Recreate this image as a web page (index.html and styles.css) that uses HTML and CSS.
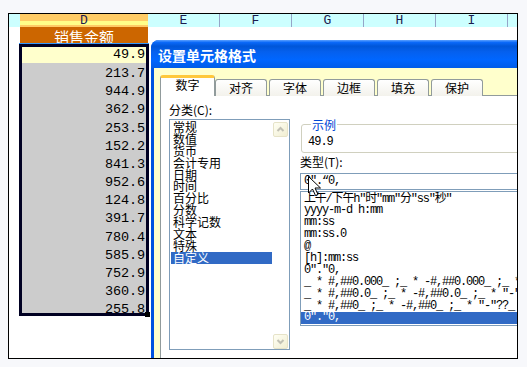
FILE: index.html
```html
<!DOCTYPE html>
<html lang="zh-CN">
<head>
    <meta charset="UTF-8">
    <title>设置单元格格式</title>
    <link rel="stylesheet" href="styles.css">
</head>
<body>
    <div class="sheet">
        <div class="col-heads">
            <div class="head corner"></div>
            <div class="head head-d">D</div>
            <div class="head">E</div>
            <div class="head">F</div>
            <div class="head">G</div>
            <div class="head">H</div>
            <div class="head">I</div>
            <div class="head"></div>
        </div>
        <div class="title-row">
            <div class="title-cell">销售金额</div>
        </div>
        <div class="selection">
            <div class="cells">
                <div class="cell active">49.9</div>
                <div class="cell">213.7</div>
                <div class="cell">944.9</div>
                <div class="cell">362.9</div>
                <div class="cell">253.5</div>
                <div class="cell">152.2</div>
                <div class="cell">841.3</div>
                <div class="cell">952.6</div>
                <div class="cell">124.8</div>
                <div class="cell">391.7</div>
                <div class="cell">780.4</div>
                <div class="cell">585.9</div>
                <div class="cell">752.9</div>
                <div class="cell">360.9</div>
                <div class="cell">255.8</div>
            </div>
            <div class="fill-handle"></div>
        </div>

        <div class="dialog">
            <div class="dialog-title">设置单元格格式</div>
            <div class="dialog-body">
                <div class="tabs">
                    <div class="tab selected">数字</div>
                    <div class="tab">对齐</div>
                    <div class="tab">字体</div>
                    <div class="tab">边框</div>
                    <div class="tab">填充</div>
                    <div class="tab">保护</div>
                </div>
                <div class="panel">
                    <div class="category">
                        <div class="label">分类(C):</div>
                        <div class="listbox">
                            <ul class="categories">
                                <li>常规</li>
                                <li>数值</li>
                                <li>货币</li>
                                <li>会计专用</li>
                                <li>日期</li>
                                <li>时间</li>
                                <li>百分比</li>
                                <li>分数</li>
                                <li>科学记数</li>
                                <li>文本</li>
                                <li>特殊</li>
                                <li class="sel">自定义</li>
                            </ul>
                            <div class="scrollbar">
                                <span class="scroll-btn">
                                    <svg width="13" height="13" viewBox="0 0 13 13"><polyline points="3.5,8 6.5,5 9.5,8" fill="none" stroke="#c2c1b4" stroke-width="2"/></svg>
                                </span>
                                <span class="scroll-btn">
                                    <svg width="13" height="13" viewBox="0 0 13 13"><polyline points="3.5,5 6.5,8 9.5,5" fill="none" stroke="#c2c1b4" stroke-width="2"/></svg>
                                </span>
                            </div>
                        </div>
                    </div>
                    <div class="format">
                        <fieldset class="sample">
                            <legend>示例</legend>
                            <div class="sample-value">49.9</div>
                        </fieldset>
                        <div class="label type-label">类型(T):</div>
                        <div class="type-input">0″.“0,
                            <svg class="cursor" width="13" height="21" viewBox="0 0 13 21"><path d="M0.5 0.5 L0.5 17 L4.5 13 L7.5 19.5 L10 18.5 L7 12 L12.5 12 Z" fill="#fff" stroke="#000" stroke-width="1"/></svg>
                        </div>
                        <ul class="type-list">
                            <li>上午/下午h″时″mm″分″ss″秒″</li>
                            <li>yyyy-m-d h:mm</li>
                            <li>mm:ss</li>
                            <li>mm:ss.0</li>
                            <li>@</li>
                            <li>[h]:mm:ss</li>
                            <li>0″.″0,</li>
                            <li>_ * #,##0.000_ ;_ * -#,##0.000_ ;_ * ″-″???_ ;_ @_ </li>
                            <li>_ * #,##0.0_ ;_ * -#,##0.0_ ;_ * ″-″?_ ;_ @_ </li>
                            <li>_ * #,##0_ ;_ * -#,##0_ ;_ * ″-″??_ ;_ @_ </li>
                            <li class="sel">0″.″0,</li>
                        </ul>
                    </div>
                </div>
            </div>
        </div>
    </div>
</body>
</html>
```

FILE: styles.css
```css
/* Reset and base styles */
* {
    margin: 0;
    padding: 0;
    box-sizing: border-box;
}

body {
    background-color: #f7f8fb;
    padding: 13px 0 0 8px;
    font-family: "Noto Sans CJK SC", sans-serif;
    color: #000;
}

/* Worksheet frame */
.sheet {
    position: relative;
    width: 510px;
    height: 346px;
    border: 1px solid #000;
    background-color: #fff;
    overflow: hidden;
}

.col-heads {
    display: grid;
    grid-template-columns: 11px 128px repeat(6, 72px);
    height: 13px;
    background-color: #ccffff;
}

.head {
    border-right: 1px solid #95a5c8;
    font: 13px/13px "Liberation Mono", monospace;
    color: #1c1c50;
    text-align: center;
}

.head.corner {
    border-right: 0;
}

.head-d {
    border-right: 0;
    background: linear-gradient(#ffcc66 0, #ffcc66 56%, #ffff88 56%, #ffff88 86%, #ffcc66 86%);
}

.title-row {
    height: 16px;
    padding-left: 11px;
}

.title-cell {
    width: 128px;
    height: 16px;
    padding-top: 2px;
    background-color: #cc6600;
    color: #fff;
    font-size: 15px;
    line-height: 15px;
    text-align: center;
}

/* Selected range */
.selection {
    position: relative;
    margin: 1px 0 0 10px;
    width: 130px;
    height: 272px;
    border: 3px solid #000022;
    box-shadow: 0 -1px 0 #3399ff;
    background-color: #cccccc;
}

.cells {
    height: 100%;
    overflow: hidden;
}

.cell {
    height: 18.16px;
    padding-right: 1px;
    font: 13.5px/18.16px "Liberation Mono", monospace;
    letter-spacing: -0.1px;
    text-align: right;
}

.cell.active {
    height: 16px;
    line-height: 16px;
    margin-bottom: 2.16px;
    background-color: #ffffcc;
}

.fill-handle {
    position: absolute;
    right: -4px;
    bottom: -4px;
    width: 5px;
    height: 5px;
    background-color: #000;
}

/* Format cells dialog */
.dialog {
    position: absolute;
    left: 142px;
    top: 26px;
    width: 380px;
    height: 330px;
    display: flex;
    flex-direction: column;
    background-color: #0053e0;
    border-radius: 8px 8px 0 0;
    overflow: hidden;
}

.dialog-title {
    flex: none;
    height: 28px;
    padding: 6px 0 0 7px;
    color: #fff;
    font-size: 14px;
    font-weight: bold;
    line-height: 18px;
    background: linear-gradient(#5aa0ff 0, #0a68f8 9%, #0056d8 22%, #0560ee 42%, #0066ff 70%, #005ce8 100%);
}

.dialog-body {
    flex: 1;
    display: flex;
    flex-direction: column;
    margin-left: 3px;
    padding: 7px 0 0 6px;
    background-color: #ffffcc;
}

.tabs {
    position: relative;
    z-index: 1;
    display: flex;
    align-items: flex-end;
    height: 21px;
}

.tab {
    width: 52px;
    height: 17px;
    margin-left: 2px;
    border: 1px solid #919b9c;
    border-bottom: 0;
    border-radius: 3px 3px 0 0;
    background: linear-gradient(#fff, #f3f2ec);
    font-size: 12px;
    line-height: 15px;
    text-align: center;
}

.tab.selected {
    width: 55px;
    height: 21px;
    margin-left: 0;
    border-top: 3px solid #ffc83c;
    background: #fff;
    line-height: 14px;
}

.tab.selected + .tab {
    margin-left: 0;
}

.panel {
    flex: 1;
    display: grid;
    grid-template-columns: 121px 1fr;
    column-gap: 10px;
    align-items: start;
    margin-top: -1px;
    padding: 7px 0 0 8px;
    border: 1px solid #919b9c;
    background-color: #fff;
    font-size: 12px;
}

.label {
    height: 13px;
    line-height: 13px;
}

.listbox {
    display: flex;
    height: 231px;
    margin-top: 3px;
    border: 1px solid #7f9db9;
}

.categories {
    flex: 1;
    list-style: none;
    padding: 1px 0 0 1px;
}

.categories li {
    height: 11.9px;
    padding-left: 2px;
    line-height: 11.9px;
}

.sel {
    background-color: #316ac5;
    color: #fff;
}

.scrollbar {
    display: flex;
    flex-direction: column;
    justify-content: space-between;
    width: 17px;
    padding: 2px 1px 0 1px;
}

.scroll-btn {
    display: block;
    width: 15px;
    height: 15px;
    border: 1px solid #e6e3c8;
    border-radius: 2px;
    background: linear-gradient(135deg, #fffff4, #f1eed2);
}

.scroll-btn svg {
    display: block;
}

.format {
    min-width: 0;
}

.sample {
    margin: 15px 0 0 1px;
    padding: 5px 0 3px 6px;
    border: 1px solid #d0d0bf;
    border-radius: 3px;
}

.sample legend {
    margin-left: 3px;
    padding: 0 1px;
    color: #0046d5;
    font-size: 12px;
    line-height: 13px;
}

.sample-value {
    font: 12px/13px "Liberation Mono", monospace;
    letter-spacing: -1px;
}

.type-label {
    margin-top: 2px;
}

.type-input {
    position: relative;
    height: 17px;
    margin-top: 5px;
    padding-left: 3px;
    border: 1px solid #7f9db9;
    font: 12px/15px "Liberation Mono", "Noto Sans CJK SC", monospace;
    letter-spacing: -1.2px;
}

.cursor {
    position: absolute;
    left: 7px;
    top: 2px;
}

.type-list {
    height: 135px;
    margin-top: 1px;
    padding-top: 1.5px;
    border: 1px solid #7f9db9;
    list-style: none;
    overflow: hidden;
    font: 12px/11.9px "Liberation Mono", "Noto Sans CJK SC", monospace;
    letter-spacing: -1.2px;
}

.type-list li {
    height: 11.9px;
    padding-left: 3px;
    white-space: pre;
}
```
